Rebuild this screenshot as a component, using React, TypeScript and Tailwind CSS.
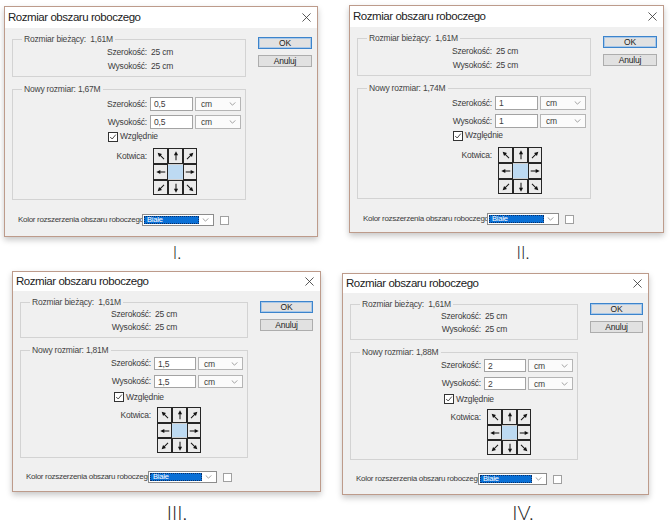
import React from 'react';

type Layout = {
  frame: string;
  title: string;
  col: string;
  label: string;
  row: string;
  row1: string;
  row2: string;
  input: string;
  select: string;
  check: string;
  checkRow: string;
  grid: string;
  gridRows: string;
  g1pb: string;
  g2pb: string;
  bottom: string;
  kolor: string;
  combo: string;
  btn: string;
};

// group boxes have pl-[9px]; label widths are measured from there
const big: Omit<Layout, 'frame'> = {
  title: 'h-[21px]',
  col: 'w-[234px]',
  label: 'w-[125px]',
  row: 'h-[14px] leading-[14px]',
  row1: 'mt-[2px]',
  row2: 'mt-[4px]',
  input: 'w-[43px]',
  select: 'w-[46px]',
  check: 'pl-[86px] mt-[2px] h-[11px]',
  checkRow: 'mt-[6px]',
  grid: 'grid-cols-[15px_15px_14px]',
  gridRows: 'grid-rows-[16px_16px_15px]',
  g1pb: 'pb-[3px]',
  g2pb: 'pb-[4px]',
  bottom: 'mt-[14px]',
  kolor: 'w-[130px]',
  combo: 'w-[72px]',
  btn: 'w-[54px] mt-[4px]',
};

const small: Omit<Layout, 'frame'> = {
  title: 'h-[19px]',
  col: 'w-[228px]',
  label: 'w-[121px]',
  row: 'h-[13px] leading-[13px]',
  row1: 'mt-[1px]',
  row2: 'mt-[5px]',
  input: 'w-[42px]',
  select: 'w-[45px]',
  check: 'pl-[84px] mt-[4px] h-[10px]',
  checkRow: 'mt-[5px]',
  grid: 'grid-cols-[15px_15px_14px]',
  gridRows: 'grid-rows-[16px_15px_15px]',
  g1pb: 'pb-[3px]',
  g2pb: 'pb-[4px]',
  bottom: 'mt-[13px]',
  kolor: 'w-[128px]',
  combo: 'w-[69px]',
  btn: 'w-[53px] mt-[5px]',
};

const Arrow = ({ deg }: { deg: number }) => (
  <svg viewBox="0 0 14 14" className="w-[12px] h-[12px]">
    <g transform={`rotate(${deg} 7 7)`}>
      <line x1="7" y1="12" x2="7" y2="5" stroke="#111" strokeWidth="1.2" />
      <polygon points="7,1.5 4.6,6.2 9.4,6.2" fill="#111" />
    </g>
  </svg>
);

const Chevron = () => (
  <svg viewBox="0 0 8 5" className="w-[7px] h-[4px]">
    <polyline points="0.5,0.5 4,4 7.5,0.5" fill="none" stroke="#8a8a8a" strokeWidth="1" />
  </svg>
);

const dirs = [315, 0, 45, 270, -1, 90, 225, 180, 135];

function Dialog({ newSize, value, l }: { newSize: string; value: string; l: Layout }) {
  return (
    <div
      className={`${l.frame} flex flex-col border border-[#bd9b8b] bg-[#f0f0f0] font-normal text-[#3c3c3c] tracking-[-0.2px] shadow-[0_3px_6px_rgba(0,0,0,0.22)] font-['Liberation_Sans',Arial,sans-serif]`}
    >
      {/* Title bar */}
      <div className={`${l.title} flex items-center justify-between bg-white pl-[3px] pr-[6px]`}>
        <span className="whitespace-nowrap text-[11.5px] tracking-[-0.45px] text-[#222]">Rozmiar obszaru roboczego</span>
        <svg viewBox="0 0 10 10" className="w-[9px] h-[9px]">
          <line x1="0.5" y1="0.5" x2="9.5" y2="9.5" stroke="#333" strokeWidth="0.9" />
          <line x1="9.5" y1="0.5" x2="0.5" y2="9.5" stroke="#333" strokeWidth="0.9" />
        </svg>
      </div>

      <div className="flex pl-[7px] pt-[5px] text-[8.5px]">
        <div className={`${l.col} flex flex-col`}>
          {/* Current size */}
          <fieldset className={`border border-[#d3d3d3] pl-[9px] ${l.g1pb}`}>
            <legend className="whitespace-nowrap px-[2px] leading-[12px] text-[#444]">Rozmiar bieżący:&nbsp; 1,61M</legend>
            <div className={`flex ${l.row}`}>
              <span className={`${l.label} text-right`}>Szerokość:</span>
              <span className="ml-[4px]">25 cm</span>
            </div>
            <div className={`flex ${l.row}`}>
              <span className={`${l.label} text-right`}>Wysokość:</span>
              <span className="ml-[4px]">25 cm</span>
            </div>
          </fieldset>

          {/* New size */}
          <fieldset className={`mt-[6px] border border-[#d3d3d3] pl-[9px] ${l.g2pb}`}>
            <legend className="whitespace-nowrap px-[2px] leading-[12px] text-[#444]">Nowy rozmiar: {newSize}</legend>
            {['Szerokość:', 'Wysokość:'].map((t, i) => (
              <div key={t} className={`flex items-center ${l.row} ${i === 0 ? l.row1 : l.row2}`}>
                <span className={`${l.label} text-right`}>{t}</span>
                <div className={`ml-[3px] h-full ${l.input} border border-[#a3a3a3] bg-white pl-[3px] leading-[12px]`}>
                  {value}
                </div>
                <div className={`ml-[2px] h-full ${l.select} flex items-center justify-between border border-[#b5b5b5] bg-[#fbfbfb] pl-[5px] pr-[4px]`}>
                  <span className="leading-[12px]">cm</span>
                  <Chevron />
                </div>
              </div>
            ))}
            <div className={`flex items-center ${l.check}`}>
              <div className="flex h-[10px] w-[10px] items-center justify-center border border-[#333] bg-white">
                <svg viewBox="0 0 10 10" className="w-[8px] h-[8px]">
                  <polyline points="1.5,5 4,7.5 8.5,2" fill="none" stroke="#333" strokeWidth="1.1" />
                </svg>
              </div>
              <span className="ml-[2px] leading-[11px]">Względnie</span>
            </div>
            <div className={`flex ${l.checkRow}`}>
              <span className={`${l.label} text-right leading-[12px] pt-[2px]`}>Kotwica:</span>
              <div className={`ml-[6px] grid ${l.grid} ${l.gridRows}`}>
                {dirs.map((d, i) =>
                  d < 0 ? (
                    <div key={i} className="bg-[#bddaf2] border-y border-[#cfcfcf]" />
                  ) : (
                    <div key={i} className="flex items-center justify-center border border-[#262626] bg-[#ebebeb]">
                      <Arrow deg={d} />
                    </div>
                  )
                )}
              </div>
            </div>
          </fieldset>

          {/* Canvas extension colour */}
          <div className={`flex items-center ${l.bottom} h-[12px]`}>
            <span className={`${l.kolor} whitespace-nowrap pl-[6px] text-[8px] tracking-[-0.3px] leading-[12px]`}>Kolor rozszerzenia obszaru roboczego:</span>
            <div className={`flex h-[12px] ${l.combo} shrink-0 items-center border border-[#8c8c8c] bg-white p-[1px]`}>
              <div className="flex h-full flex-1 items-center border border-dotted border-[#0b2f66] bg-[#0a70d6] pl-[2px] text-[7.5px] leading-[8px] text-white">
                Białe
              </div>
              <div className="flex w-[13px] items-center justify-center">
                <Chevron />
              </div>
            </div>
            <div className="ml-[6px] h-[9px] w-[9px] shrink-0 border border-[#a0a0a0] bg-white" />
          </div>
        </div>

        {/* Buttons */}
        <div className={`ml-[12px] flex flex-col gap-[6px] ${l.btn}`}>
          <div className="flex h-[12px] items-center justify-center border border-[#3c84cc] bg-[#e1e1e1] shadow-[inset_0_0_0_1px_#a9c8e8] leading-[10px] text-[#222]">
            OK
          </div>
          <div className="flex h-[12px] items-center justify-center border border-[#adadad] bg-[#e1e1e1] leading-[10px] text-[#222]">
            Anuluj
          </div>
        </div>
      </div>
    </div>
  );
}

export default function App() {
  return (
    <div className="h-[525px] w-[670px] bg-white font-['Lato','Liberation_Sans',sans-serif] font-light text-[#222]">
      <div className="flex h-[238px] items-start">
        <div className="ml-[4px] mt-[6px]">
          <Dialog newSize="1,67M" value="0,5" l={{ ...big, frame: 'w-[314px] h-[231px]' }} />
        </div>
        <div className="ml-[31px] mt-[5px]">
          <Dialog newSize="1,74M" value="1" l={{ ...big, frame: 'w-[315px] h-[228px]' }} />
        </div>
      </div>
      <div className="flex h-[33px] pt-[5px] text-[17px] leading-[20px]">
        <div className="w-[354px] text-center">I.</div>
        <div className="ml-[22px] w-[294px] text-center">II.</div>
      </div>
      <div className="flex h-[230px] items-start">
        <div className="ml-[12px]">
          <Dialog newSize="1,81M" value="1,5" l={{ ...small, frame: 'w-[309px] h-[221px]' }} />
        </div>
        <div className="ml-[21px] mt-[2px]">
          <Dialog newSize="1,88M" value="2" l={{ ...small, frame: 'w-[307px] h-[222px]' }} />
        </div>
      </div>
      <div className="flex h-[22px] pt-[1px] text-[20px] leading-[20px]">
        <div className="w-[354px] text-center">III.</div>
        <div className="ml-[22px] w-[294px] text-center">IV.</div>
      </div>
    </div>
  );
}
